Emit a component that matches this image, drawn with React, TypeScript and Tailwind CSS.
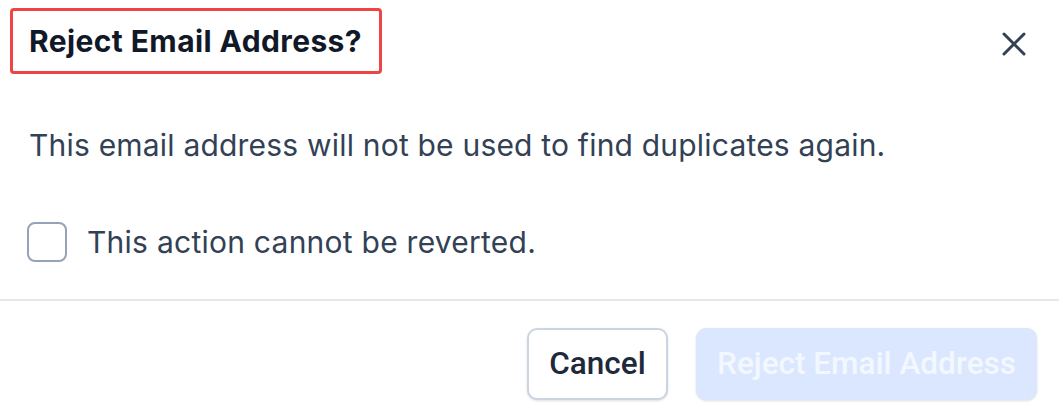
import React from "react";

export default function App() {
  return (
    <div className="w-[1059px] h-[416px] bg-white overflow-hidden" style={{ fontFamily: "Inter, 'Noto Sans', sans-serif" }}>
      <div className="flex items-start justify-between pl-[10px] pr-[33px] pt-[8px]">
        <div className="border-[3px] border-[#ef4444] rounded-[4px] pl-[16px] pr-[17px] h-[66px] flex items-center">
          <span className="text-[30px] font-bold tracking-[0.4px] text-[#111827] leading-none">Reject Email Address?</span>
        </div>
        <button className="mt-[24px] w-[24px] h-[24px] flex items-center justify-center text-[#334155]">
          <svg width="24" height="24" viewBox="0 0 24 24" fill="none" stroke="currentColor" strokeWidth="3" strokeLinecap="round">
            <path d="M2 2L22 22M22 2L2 22" />
          </svg>
        </button>
      </div>
      <div className="pl-[29px] pt-[51px]">
        <p className="text-[30px] tracking-[0.2px] leading-[40px] text-[#334155]">This email address will not be used to find duplicates again.</p>
      </div>
      <div className="pl-[27px] pt-[57px] flex items-center gap-[20px]">
        <div className="w-[40px] h-[40px] rounded-[8px] border-2 border-[#94a3b8] bg-white"></div>
        <span className="text-[30px] tracking-[0.25px] leading-[40px] text-[#334155]">This action cannot be reverted.</span>
      </div>
      <div className="mt-[37px] h-[2px] bg-[#e5e7eb]"></div>
      <div className="flex justify-end gap-[28px] pr-[22px] pt-[27px]">
        <button className="w-[141px] h-[72px] rounded-[10px] border-2 border-[#cbd5e1] bg-white text-[31.5px] font-medium text-[#1e293b] shadow-sm" style={{ fontFamily: "Roboto, sans-serif" }}>
          Cancel
        </button>
        <button className="w-[341px] h-[72px] rounded-[10px] bg-[#dbe7fe] text-[31.5px] font-medium text-[#f3f7ff] shadow-sm" style={{ fontFamily: "Roboto, sans-serif" }}>
          Reject Email Address
        </button>
      </div>
    </div>
  );
}
